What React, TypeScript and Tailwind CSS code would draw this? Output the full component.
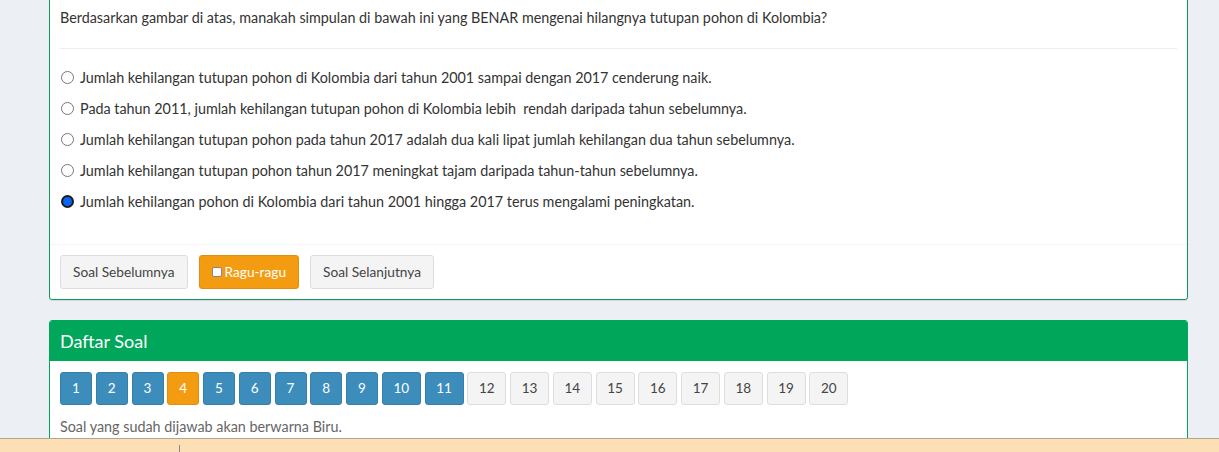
import React from "react";

const options = [
  "Jumlah kehilangan tutupan pohon di Kolombia dari tahun 2001 sampai dengan 2017 cenderung naik.",
  "Pada tahun 2011, jumlah kehilangan tutupan pohon di Kolombia lebih  rendah daripada tahun sebelumnya.",
  "Jumlah kehilangan tutupan pohon pada tahun 2017 adalah dua kali lipat jumlah kehilangan dua tahun sebelumnya.",
  "Jumlah kehilangan tutupan pohon tahun 2017 meningkat tajam daripada tahun-tahun sebelumnya.",
  "Jumlah kehilangan pohon di Kolombia dari tahun 2001 hingga 2017 terus mengalami peningkatan.",
];

const selected = 4;
const current = 4;
const answered = 11;

function Radio({ checked }: { checked: boolean }) {
  return checked ? (
    <span className="mt-[3px] box-border inline-block h-[13px] w-[13px] shrink-0 rounded-full border-[2px] border-[#1b1b1b] bg-[#0b63f6]" />
  ) : (
    <span className="mt-[3px] box-border inline-block h-[13px] w-[13px] shrink-0 rounded-full border border-[#777] bg-white" />
  );
}

function NumButton({ n }: { n: number }) {
  const base = `h-[33px] rounded-[3px] border text-[13.5px] leading-none flex items-center justify-center ${
    n < 10 ? "w-[32px]" : "w-[39px]"
  }`;
  if (n === current)
    return <button className={`${base} border-[#e08e0b] bg-[#f39c12] text-white`}>{n}</button>;
  if (n <= answered)
    return <button className={`${base} border-[#367fa9] bg-[#3c8dbc] text-white`}>{n}</button>;
  return <button className={`${base} border-[#ddd] bg-[#f4f4f4] text-[#444]`}>{n}</button>;
}

export default function App() {
  return (
    <div
      className="relative h-[452px] overflow-hidden bg-[#ecf0f5] text-[14.35px] text-[#333]"
      style={{ fontFamily: "Lato, 'Liberation Sans', sans-serif" }}
    >
      <div className="pl-[49px] pr-[31px]">
        {/* Soal card */}
        <div className="-mt-[27px] rounded-[3px] border border-[#12985a] bg-white shadow-[0_1px_1px_rgba(0,0,0,0.1)]">
          <div className="px-[10px] pt-[10px]">
            <p className="-mt-[2px] h-5 overflow-hidden text-right leading-5">
              Berdasarkan data tersebut, kehilangan tutupan pohon di Kolombia cukup mengkhawatirkan (Sumber: pohon, 2019) yang sedang,
            </p>
            <p className="mt-[6px] leading-5">
              Berdasarkan gambar di atas, manakah simpulan di bawah ini yang BENAR mengenai hilangnya tutupan pohon di Kolombia?
            </p>
            <hr className="my-5 border-t border-[#eee]" />
            <div className="-mt-[1px] flex flex-col gap-[11px] pl-[1px]">
              {options.map((o, i) => (
                <label key={i} className="flex items-start gap-[6px] leading-5">
                  <Radio checked={i === selected} />
                  <span className="whitespace-pre">{o}</span>
                </label>
              ))}
            </div>
          </div>
          <div className="mt-[32px] flex gap-[11px] border-t border-[#f4f4f4] px-[10px] pt-[10px] pb-[10px] text-[13.7px]">
            <button className="h-[34px] rounded-[3px] border border-[#ddd] bg-[#f4f4f4] px-3 text-[#444]">
              Soal Sebelumnya
            </button>
            <button className="flex h-[34px] items-center gap-[3px] rounded-[3px] border border-[#e08e0b] bg-[#f39c12] px-3 text-white">
              <span className="inline-block h-[10px] w-[10px] rounded-[2px] border border-[#888] bg-white" />
              Ragu-ragu
            </button>
            <button className="h-[34px] rounded-[3px] border border-[#ddd] bg-[#f4f4f4] px-3 text-[#444]">
              Soal Selanjutnya
            </button>
          </div>
        </div>

        {/* Daftar Soal card */}
        <div className="mt-5 overflow-hidden rounded-t-[3px] border border-[#00a65a] bg-white">
          <div className="flex h-[40px] items-center bg-[#00a65a] px-[10px] text-[18px] text-white">
            Daftar Soal
          </div>
          <div className="px-[10px] pt-[11px] pb-5">
            <div className="flex gap-[3.75px]">
              {Array.from({ length: 20 }, (_, i) => (
                <NumButton key={i} n={i + 1} />
              ))}
            </div>
            <p className="mt-3 leading-5 text-[#666]">Soal yang sudah dijawab akan berwarna Biru.</p>
          </div>
        </div>
      </div>

      {/* fixed bottom bar */}
      <div className="absolute bottom-0 left-0 right-0 h-[14px] border-t border-[#b5a48f] bg-[#fddfb6]">
        <span className="absolute left-[179px] top-[6px] h-[8px] w-px bg-[#888]" />
      </div>
    </div>
  );
}
